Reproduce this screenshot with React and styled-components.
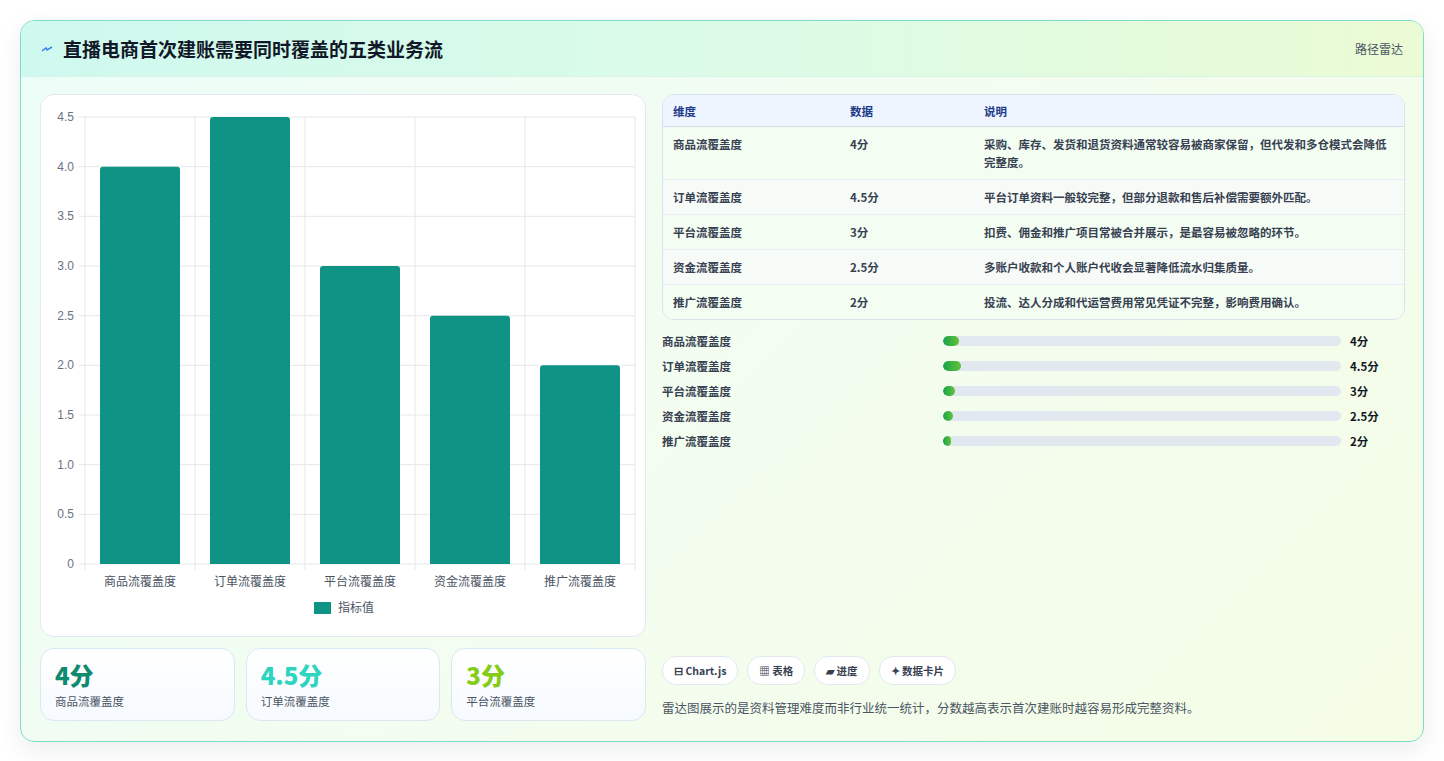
import styled, { createGlobalStyle } from 'styled-components'

const Global = createGlobalStyle`
  body { margin: 0; background: #f3f4f6; font-family: "Noto Sans CJK SC", "Noto Sans", sans-serif; }
`

const Page = styled.div`
  padding: 20px 20px 21px 20px;
  background: #ffffff;
  height: 761px;
  box-sizing: border-box;
`

const Card = styled.div`
  border: 1px solid #7fdcc8;
  border-radius: 14px;
  overflow: hidden;
  background: linear-gradient(135deg, #ecfdf8 0%, #f3fdf0 50%, #f5fde6 100%);
  box-shadow: 0 8px 24px rgba(15, 23, 42, 0.08);
  height: 100%;
  display: flex;
  flex-direction: column;
`

const Header = styled.div`
  height: 55px;
  flex: none;
  display: flex;
  align-items: center;
  justify-content: space-between;
  padding: 0 20px;
  background: linear-gradient(90deg, #cff9ef 0%, #dcfbe6 55%, #ebfbd4 100%);
  border-bottom: 1px solid #d9f3e9;
`

const Title = styled.h1`
  margin: 0;
  font-size: 19px;
  font-weight: 700;
  color: #111827;
  display: flex;
  align-items: center;
  gap: 10px;
`

const Tag = styled.span`
  font-size: 12px;
  color: #4b5563;
`

const Body = styled.div`
  flex: 1;
  display: grid;
  grid-template-columns: 606px 1fr;
  gap: 16px;
  padding: 17px 18px 18px 19px;
  min-height: 0;
`

const Col = styled.div`
  display: flex;
  flex-direction: column;
  min-height: 0;
`

const ChartBox = styled.div`
  height: 543px;
  background: #fff;
  border: 1px solid #e2e8f0;
  border-radius: 14px;
  box-sizing: border-box;
`

const Stats = styled.div`
  margin-top: 11px;
  display: grid;
  grid-template-columns: repeat(3, 1fr);
  gap: 11px;
`

const Stat = styled.div`
  height: 73px;
  box-sizing: border-box;
  border: 1px solid #dbe7f3;
  border-radius: 14px;
  background: linear-gradient(180deg, #ffffff, #f6faff);
  padding: 10px 14px;
`

const StatValue = styled.div`
  font-size: 24px;
  font-weight: 800;
  color: ${p => p.$color};
  line-height: 32px;
`

const StatLabel = styled.div`
  font-size: 11.5px;
  color: #4b5563;
  margin-top: 2px;
`

const Table = styled.table`
  width: 100%;
  border-collapse: separate;
  border-spacing: 0;
  border: 1px solid #d6e2ee;
  border-radius: 12px;
  overflow: hidden;
  font-size: 11.5px;
  background: #fff;
`

const Th = styled.th`
  text-align: left;
  font-weight: 700;
  color: #1e3a8a;
  background: #eef5fe;
  height: 31px;
  padding: 0 10px;
  border-bottom: 1px solid #cfdcea;
`

const Td = styled.td`
  color: #374151;
  font-weight: 600;
  padding: 8px 10px;
  line-height: 18px;
  vertical-align: top;
  border-top: ${p => (p.$first ? 'none' : '1px solid #e5edf5')};
  background: ${p => (p.$alt ? '#f7fbf8' : '#f3fdf2')};
`

const Bars = styled.div`
  margin-top: 12px;
  display: flex;
  flex-direction: column;
  gap: 8px;
`

const BarRow = styled.div`
  display: grid;
  grid-template-columns: 281px 1fr 64px;
  align-items: center;
  height: 17px;
  font-size: 11.5px;
  font-weight: 700;
  color: #374151;
`

const Track = styled.div`
  height: 10px;
  border-radius: 5px;
  background: #e2e8f0;
  overflow: hidden;
`

const Fill = styled.div`
  height: 100%;
  border-radius: 5px;
  background: linear-gradient(90deg, #16a34a, #65c23a);
`

const Value = styled.span`
  padding-left: 9px;
  color: #111827;
`

const Spacer = styled.div`
  flex: 1;
`

const Chips = styled.div`
  display: flex;
  gap: 9px;
`

const Chip = styled.span`
  height: 27px;
  padding: 0 11px;
  border-radius: 14px;
  border: 1px solid #e2e8f0;
  background: #fff;
  font-size: 10.5px;
  font-weight: 700;
  color: #374151;
  display: flex;
  align-items: center;
  gap: 4px;
`

const Note = styled.p`
  margin: 13px 0 6px;
  font-size: 12.5px;
  color: #4b5563;
`

const items = [
  { name: '商品流覆盖度', v: 4, d: '采购、库存、发货和退货资料通常较容易被商家保留，但代发和多仓模式会降低完整度。' },
  { name: '订单流覆盖度', v: 4.5, d: '平台订单资料一般较完整，但部分退款和售后补偿需要额外匹配。' },
  { name: '平台流覆盖度', v: 3, d: '扣费、佣金和推广项目常被合并展示，是最容易被忽略的环节。' },
  { name: '资金流覆盖度', v: 2.5, d: '多账户收款和个人账户代收会显著降低流水归集质量。' },
  { name: '推广流覆盖度', v: 2, d: '投流、达人分成和代运营费用常见凭证不完整，影响费用确认。' },
]

const Chart = () => {
  const left = 44, top = 22, w = 550, h = 447
  const ticks = [0, 0.5, 1, 1.5, 2, 2.5, 3, 3.5, 4, 4.5]
  const y = v => top + h - (v / 4.5) * h
  const cw = w / 5
  return (
    <svg width="604" height="541" style={{ display: 'block' }}>
      {ticks.map(t => (
        <g key={t}>
          <line x1={left - 6} x2={left + w} y1={y(t)} y2={y(t)} stroke="#e5e7eb" />
          <text x={left - 11} y={y(t) + 4} fontSize="12" fill="#6b7280" textAnchor="end" fontFamily="Liberation Sans, sans-serif">{t === 0 ? '0' : t.toFixed(1)}</text>
        </g>
      ))}
      {[0, 1, 2, 3, 4, 5].map(i => (
        <line key={i} x1={left + i * cw} x2={left + i * cw} y1={top} y2={top + h + 6} stroke="#e5e7eb" />
      ))}
      {items.map((it, i) => (
        <g key={it.name}>
          <path
            d={`M${left + i * cw + 15} ${top + h} V${y(it.v) + 3} q0 -3 3 -3 h74 q3 0 3 3 V${top + h} Z`}
            fill="#0e9384"
          />
          <text x={left + i * cw + cw / 2} y={top + h + 22} fontSize="12" fill="#4b5563" textAnchor="middle">{it.name}</text>
        </g>
      ))}
      <rect x="273" y="507" width="17" height="12" fill="#0e9384" />
      <text x="297" y="517" fontSize="12" fill="#4b5563">指标值</text>
    </svg>
  )
}

export default function App() {
  return (
    <Page>
      <Global />
      <Card>
        <Header>
          <Title>
            <svg width="12" height="10" viewBox="0 0 12 10"><path d="M1 7 L5 4 L6 6 L11 3" stroke="#3b82f6" strokeWidth="1.5" fill="none" /></svg>
            直播电商首次建账需要同时覆盖的五类业务流
          </Title>
          <Tag>路径雷达</Tag>
        </Header>
        <Body>
          <Col>
            <ChartBox><Chart /></ChartBox>
            <Stats>
              <Stat><StatValue $color="#0e8a6e">4分</StatValue><StatLabel>商品流覆盖度</StatLabel></Stat>
              <Stat><StatValue $color="#2dd4bf">4.5分</StatValue><StatLabel>订单流覆盖度</StatLabel></Stat>
              <Stat><StatValue $color="#84cc16">3分</StatValue><StatLabel>平台流覆盖度</StatLabel></Stat>
            </Stats>
          </Col>
          <Col>
            <Table>
              <thead>
                <tr>
                  <Th style={{ width: 157 }}>维度</Th>
                  <Th style={{ width: 114 }}>数据</Th>
                  <Th>说明</Th>
                </tr>
              </thead>
              <tbody>
                {items.map((it, i) => (
                  <tr key={it.name}>
                    <Td $first={i === 0} $alt={i % 2 === 1}>{it.name}</Td>
                    <Td $first={i === 0} $alt={i % 2 === 1}>{it.v}分</Td>
                    <Td $first={i === 0} $alt={i % 2 === 1}>{it.d}</Td>
                  </tr>
                ))}
              </tbody>
            </Table>
            <Bars>
              {items.map(it => (
                <BarRow key={it.name}>
                  <span>{it.name}</span>
                  <Track><Fill style={{ width: `${it.v}%` }} /></Track>
                  <Value>{it.v}分</Value>
                </BarRow>
              ))}
            </Bars>
            <Spacer />
            <Chips>
              <Chip>⊟ Chart.js</Chip>
              <Chip>▦ 表格</Chip>
              <Chip>▰ 进度</Chip>
              <Chip>✦ 数据卡片</Chip>
            </Chips>
            <Note>雷达图展示的是资料管理难度而非行业统一统计，分数越高表示首次建账时越容易形成完整资料。</Note>
          </Col>
        </Body>
      </Card>
    </Page>
  )
}
